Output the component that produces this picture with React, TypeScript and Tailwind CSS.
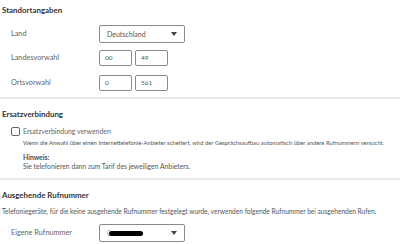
import React from 'react';

function Caret() {
  return (
    <svg width="6" height="4" viewBox="0 0 6 4" className="shrink-0">
      <path d="M0 0 L6 0 L3 4 Z" fill="#444" />
    </svg>
  );
}

function Select({ children }: { children: React.ReactNode }) {
  return (
    <div className="w-[86px] h-[18px] border border-[#8a8a8a] rounded-[2px] flex items-center justify-between pl-[7px] pr-[7px] bg-white">
      <div className="flex items-center text-[7px] text-[#555] leading-none">{children}</div>
      <Caret />
    </div>
  );
}

function Box({ value }: { value: string }) {
  return (
    <div className="w-[33px] h-[16px] border border-[#8a8a8a] rounded-[2px] flex items-center pl-[5px] text-[6.5px] text-[#555] leading-none">
      {value}
    </div>
  );
}

function Row({ label, children, className = '' }: { label: string; children: React.ReactNode; className?: string }) {
  return (
    <div className={`flex items-center ${className}`}>
      <div className="w-[99px] shrink-0 pl-[11px] text-[7.3px] text-[#666] leading-none">{label}</div>
      {children}
    </div>
  );
}

function Heading({ children }: { children: React.ReactNode }) {
  return <div className="pl-[2px] h-[12px] leading-[12px] text-[7.9px] font-bold text-[#333]">{children}</div>;
}

function Divider() {
  return <div className="h-[2px] bg-[#e8e8e8] w-full" />;
}

export default function App() {
  return (
    <div className="w-[400px] h-[244px] bg-white overflow-hidden font-['Lato',sans-serif]">
      {/* Standortangaben */}
      <div className="pt-[4px]">
        <Heading>Standortangaben</Heading>
        <Row label="Land" className="mt-[9px] h-[18px]">
          <Select>Deutschland</Select>
        </Row>
        <Row label="Landesvorwahl" className="mt-[7px] h-[16px]">
          <div className="flex gap-[3px]">
            <Box value="00" />
            <Box value="49" />
          </div>
        </Row>
        <Row label="Ortsvorwahl" className="mt-[9px] h-[16px]">
          <div className="flex gap-[3px]">
            <Box value="0" />
            <Box value="561" />
          </div>
        </Row>
      </div>
      <div className="mt-[6px]">
        <Divider />
      </div>

      {/* Ersatzverbindung */}
      <div className="pt-[9px]">
        <Heading>Ersatzverbindung</Heading>
        <div className="mt-[6px] h-[10px] flex items-center pl-[11px]">
          <div className="w-[9px] h-[9px] border border-[#666] rounded-[2px] bg-white" />
          <span className="ml-[3px] text-[6.9px] text-[#666] leading-none">Ersatzverbindung verwenden</span>
        </div>
        <div className="pl-[23px] mt-[3px] h-[8px] leading-[8px] text-[5.85px] text-[#555] whitespace-nowrap">
          Wenn die Anwahl über einen Internettelefonie-Anbieter scheitert, wird der Gesprächsaufbau automatisch über andere Rufnummern versucht.
        </div>
        <div className="pl-[23px] mt-[6px] h-[9px] leading-[9px] text-[6.8px] font-bold text-[#3d4a5c]">Hinweis:</div>
        <div className="pl-[23px] h-[9px] leading-[9px] text-[6.8px] text-[#555] whitespace-nowrap">
          Sie telefonieren dann zum Tarif des jeweiligen Anbieters.
        </div>
      </div>
      <div className="mt-[7px]">
        <Divider />
      </div>

      {/* Ausgehende Rufnummer */}
      <div className="pt-[9px]">
        <Heading>Ausgehende Rufnummer</Heading>
        <div className="pl-[2px] mt-[5px] h-[10px] leading-[10px] text-[6.6px] text-[#555] whitespace-nowrap">
          Telefoniegeräte, für die keine ausgehende Rufnummer festgelegt wurde, verwenden folgende Rufnummer bei ausgehenden Rufen.
        </div>
        <Row label="Eigene Rufnummer" className="mt-[8px] h-[18px]">
          <Select>
            <span className="text-[#999]">0</span>
            <span className="ml-[-2px] w-[34px] h-[5px] rounded-full bg-black" />
          </Select>
        </Row>
      </div>
    </div>
  );
}
